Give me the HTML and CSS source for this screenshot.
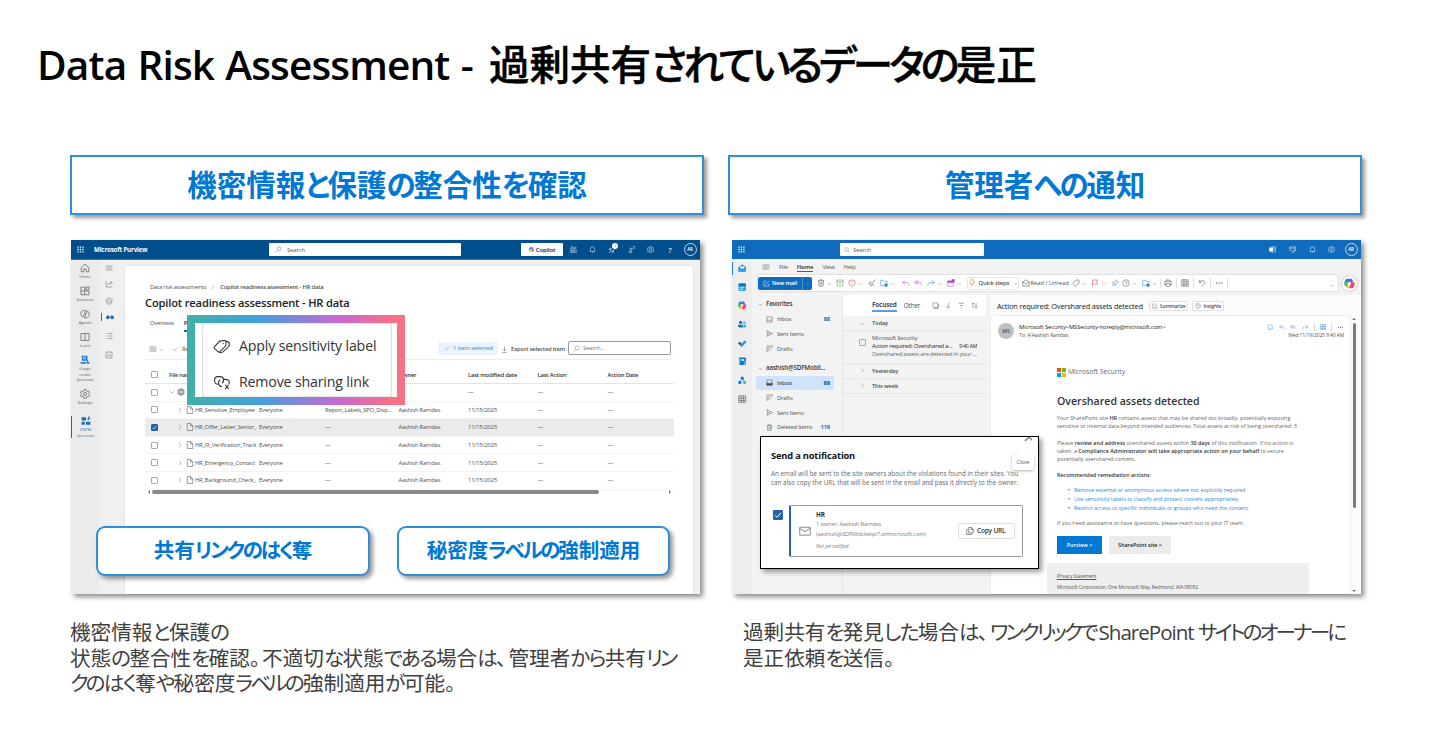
FILE: index.html
```html
<!DOCTYPE html>
<html lang="ja">
<head>
  <meta charset="utf-8">
  <title>Data Risk Assessment</title>
  <link rel="stylesheet" href="styles.css">
</head>
<body>
  <!-- Icon sprite -->
  <svg class="sprite" aria-hidden="true">
    <symbol id="waffle" viewBox="0 0 16 16"><path d="M1 1h3v3H1zM6.500 1h3v3h-3zM12 1h3v3h-3zM1 6.500h3v3H1zM6.500 6.500h3v3h-3zM12 6.500h3v3h-3zM1 12h3v3H1zM6.500 12h3v3h-3zM12 12h3v3h-3z" fill="currentColor" stroke="none"/></symbol>
    <symbol id="search" viewBox="0 0 16 16"><circle cx="9.500" cy="6.500" r="4.500"/><path d="M6.300 9.700 1.500 14.500"/></symbol>
    <symbol id="search-r" viewBox="0 0 16 16"><circle cx="6.500" cy="6.500" r="5"/><path d="m10 10 5 5"/></symbol>
    <symbol id="chev-d" viewBox="0 0 16 16"><path d="m3 6 5 5 5-5"/></symbol>
    <symbol id="chev-r" viewBox="0 0 16 16"><path d="m5 2 6 6-6 6"/></symbol>
    <symbol id="check" viewBox="0 0 16 16"><path d="m2 8.500 4 4 8-9"/></symbol>
    <symbol id="copilot" viewBox="0 0 16 16"><g stroke="none"><path d="M5 1h5c1 0 1.600.7 2 1.800L13 6H7L5.500 10H2C.3 10 .2 8 .6 6.500L2 2.500C2.500 1.500 3.500 1 5 1z" fill="#1b8fe8"/><path d="M.6 7c.4-1 1-1.500 2-1.500h3L4.500 10l-.8 3C2 13 0 10 .6 7z" fill="#3cc26b"/><path d="M3.500 11 5 6h3l-1 5-1.500 4C4.500 15 3.500 13.500 3.500 11z" fill="#f5b41c"/><path d="M11 6h3c1.700 0 2 1.800 1.500 3.500L14 13.500c-.5 1-1.500 1.500-3 1.500H5.500C7 15 7.500 14 8 12.500L9.500 8c.3-1 .8-2 1.500-2z" fill="#ef4a6b"/><path d="M9.500 1C12 1 12 2.500 12.500 4l.5 2 1.500.2C13 6 11 6 10 8L8.500 6 9 2z" fill="#8b52e6"/><path d="m6.800 6-.9 4h3.300l.9-4z" fill="#fff"/></g></symbol>
    <symbol id="bell" viewBox="0 0 16 16"><path d="M3 11.500V7a5 5 0 0 1 10 0v4.500l1 1H2zM6.500 13a1.500 1.500 0 0 0 3 0"/></symbol>
    <symbol id="gear" viewBox="0 0 16 16"><path d="m6.500 1-.4 2-2 1L2 3.400.7 6 2.200 7.400v1.300L.7 10 2 12.600l2-.6 2.100 1 .4 2h3l.4-2 2.100-1 2 .6 1.300-2.600-1.500-1.300V7.400L15.300 6 14 3.400 12 4l-2.100-1-.4-2z"/><circle cx="8" cy="8" r="2.500"/></symbol>
    <symbol id="rocket" viewBox="0 0 16 16"><path d="M5 10c0-5 4-8.500 9-8.500C14 7 11 10.500 6.500 11zM4.500 7H2l2-2.500h2.500M9 11v2.500L11 12V9.500M2 14l3-3"/></symbol>
    <symbol id="people" viewBox="0 0 16 16"><circle cx="7" cy="7" r="2.500"/><path d="M2 14.500c0-4 9-4 7 0zM10.500 1.500H15v4h-2.500L11 7"/></symbol>
    <symbol id="tools" viewBox="0 0 16 16"><path d="M1 2h6.500M4.500 2v12.500M1.500 5v9.500h6V5M9.500 1.500v6M13.500 1.500v5M9.500 10h5v4.500h-5zM9.500 5h4"/></symbol>
    <symbol id="home" viewBox="0 0 16 16"><path d="M2 7.500 8 1.500l6 6V14H10V9.500H6V14H2z"/></symbol>
    <symbol id="apps" viewBox="0 0 16 16"><path d="M1.500 2h6v12h-6zM1.500 8h13v6h-7M9.500 1.500h5V6h-5z"/></symbol>
    <symbol id="agents" viewBox="0 0 16 16"><path d="M7 2C2 2 1 6 1.500 9c.3 2.500 1.500 3.500 3 4L9.500 3C9 2.300 8 2 7 2zM11.500 3c3 1 3.500 4 3 7-.5 3-3.500 4.500-7.500 4z"/></symbol>
    <symbol id="book" viewBox="0 0 16 16"><path d="M1.500 2.500H14.500v11H1.500zM8 2.500v11"/></symbol>
    <symbol id="usage" viewBox="0 0 16 16"><g fill="currentColor" stroke="none"><path d="M3 1h9v8H3zM1 11h9v3H1z"/><path d="M11 8h2v3h2v3h-4z"/></g><path d="M5 3.500h4M5 6h4" stroke="#fff"/></symbol>
    <symbol id="dspm" viewBox="0 0 16 16"><path d="M1 2h7v5H1zM1 9h5v5H1zM8 9h7v5H8zM10 5l1.200-2L13 2l-1.800-.5L13 0l.5 1.500L15 4l-2 .5L12 7z" fill="currentColor" stroke="none"/></symbol>
    <symbol id="menu" viewBox="0 0 16 16"><path d="M1 4h14M1 8h14M1 12h14"/></symbol>
    <symbol id="chart" viewBox="0 0 16 16"><path d="M2 2v12h12M4.500 10 8 6.500l2.500 2L14 4M10.500 4H14v3.500"/></symbol>
    <symbol id="eye" viewBox="0 0 16 16"><path d="M14 11a6.500 6.500 0 1 1 .5-4.500c0 3-3 3.500-3.500 1.500a3 3 0 1 0-1 2.500c2 1 4-.5 4-1.500"/></symbol>
    <symbol id="glasses" viewBox="0 0 16 16"><path d="M2 5h4v2h4V5h4l1.500 3v4H10V9.500H6V12H.5V8z" fill="currentColor" stroke="none"/></symbol>
    <symbol id="list" viewBox="0 0 16 16"><path d="M1 3h2M5.500 3H15M1 8h2M5.500 8H15M1 13h2M5.500 13H15"/></symbol>
    <symbol id="report" viewBox="0 0 16 16"><path d="M2 2h12v12H2zM5 11V8M8 11V5M11 11V8"/></symbol>
    <symbol id="doc" viewBox="0 0 16 16"><path d="M2.500 1H9l4.500 4.500V15h-11zM9 1v5h4.500"/></symbol>
    <symbol id="globe" viewBox="0 0 16 16"><circle cx="8" cy="8" r="6.500"/><ellipse cx="8" cy="8" rx="3" ry="6.500"/><path d="M2 5.500h12M2 10.500h12"/></symbol>
    <symbol id="download" viewBox="0 0 16 16"><path d="M8 1v10M4 7.500 8 11.500l4-4M3 15h10"/></symbol>
    <symbol id="label" viewBox="0 0 20 16"><path d="m1.500 8.500 6-6.500 5-.7c1.300 0 2 .8 2 2l-.3 4L8 13.500c-1 .8-2 .8-2.800 0L1.500 10c-.4-.5-.4-1 0-1.500zM14.500 2c3 .5 3.800 2 3.800 3.500 0 2-1 3-2.300 4L11 14c-1.500 1.200-3 1.300-4.500.5"/><path d="m11 4.300.8.800"/></symbol>
    <symbol id="unlink" viewBox="0 0 20 16"><path d="M5.500 10C.5 10 .5 1.500 5.500 1.500H8c4 0 5 5 2 7M8 5c-3 2-2.500 7.500 2 7.500M11.500 4.500H14c4 0 5 3 3.500 5.500M13.500 10.500l4 4.500M17.500 10.500l-4 4.500"/></symbol>
    <symbol id="mail" viewBox="0 0 16 16"><path d="M1 3h14v10.500H1zM1 4.500l7 4.500 7-4.500"/></symbol>
    <symbol id="mail-open" viewBox="0 0 16 16"><path d="M1.500 6 8 1.500 14.500 6v8h-13zM1.500 6 8 10l6.500-4"/></symbol>
    <symbol id="inbox" viewBox="0 0 16 16"><path d="M2 2h12v12H2zM2 9h3.500c.5 3 4.500 3 5 0H14"/></symbol>
    <symbol id="inbox-fill" viewBox="0 0 16 16"><path d="M2 2h12v12H2z"/><path d="M2 9h3.500c.5 2.500 4.500 2.500 5 0H14v5H2z" fill="currentColor"/></symbol>
    <symbol id="send" viewBox="0 0 16 16"><path d="m2 1.500 13 6.500-13 6.500L4 8zM4 8h5"/></symbol>
    <symbol id="draft" viewBox="0 0 16 16"><path d="M14.500 2 12 1 3 10l-1.500 4.500L6 13l8.500-9zM1 2h8M1 5.500h5M1 9h2"/></symbol>
    <symbol id="trash" viewBox="0 0 16 16"><path d="M1.500 3.500h13M6 3.500v-2h4v2M3 3.500 4 14.500h8l1-11M6.500 6v6M9.500 6v6"/></symbol>
    <symbol id="archive" viewBox="0 0 16 16"><path d="M1.500 2h13v3.500h-13zM2.500 5.500v8.500h11V5.500M6 8.500h4"/></symbol>
    <symbol id="shield" viewBox="0 0 16 16"><path d="M8 1.500c2 1.500 4 2 6 2V8c0 3.500-2.500 5.500-6 7-3.500-1.500-6-3.500-6-7V3.500c2 0 4-.5 6-2zM8 4.500v4M8 10.500v1.500"/></symbol>
    <symbol id="broom" viewBox="0 0 16 16"><path d="M15 1 9.500 6.500M6 5l5 5-4 4.500L1.500 9zM4 8l4.500 4.500"/></symbol>
    <symbol id="folder" viewBox="0 0 16 16"><path d="M8 13.500H1.500v-11H6l2 2h6.500V8"/><circle cx="12" cy="12" r="3" fill="currentColor"/></symbol>
    <symbol id="reply" viewBox="0 0 16 16"><path d="M6 2.500 1.500 7 6 11.500M1.500 7H9c3.500 0 5 2 5.500 6"/></symbol>
    <symbol id="reply-all" viewBox="0 0 16 16"><path d="M5 2.500.8 7 5 11.500M8.500 2.500 4.300 7l4.200 4.500M4.300 7H10c3.500 0 4.500 2 5 6"/></symbol>
    <symbol id="forward" viewBox="0 0 16 16"><path d="M10 2.500 14.500 7 10 11.500M14.500 7H7c-3.500 0-5 2-5.500 6"/></symbol>
    <symbol id="calendar" viewBox="0 0 16 16"><path d="M1.500 4h11v10.500h-11z"/><path d="M1.500 4h11v3h-11zM10 1h5v5h-5z" fill="currentColor"/></symbol>
    <symbol id="bolt" viewBox="0 0 16 16"><path d="M5 1.500h7L10 6h3.500L6 14.500 7.500 9H3.500z"/></symbol>
    <symbol id="tag" viewBox="0 0 16 16"><path d="M8 2h6v6l-7 6.500L1.500 9z"/><path d="M11.500 4.500h.1"/></symbol>
    <symbol id="flag" viewBox="0 0 16 16"><path d="M3 15V2h11l-3 4 3 4H3"/></symbol>
    <symbol id="pin" viewBox="0 0 16 16"><path d="m10 1.500 4.500 4.500L10 8.500 9 13 3 7l4.500-1zM6 10l-4.500 4.500"/></symbol>
    <symbol id="clock" viewBox="0 0 16 16"><circle cx="8" cy="8" r="6.500"/><path d="M8 4v4.500h3"/></symbol>
    <symbol id="print" viewBox="0 0 16 16"><path d="M4 5V2h8v3M4 12H1.500V5h13v7H12M4 9h8v5.500H4z"/></symbol>
    <symbol id="grid" viewBox="0 0 16 16"><path d="M1.500 1.500h13v13h-13zM1.500 6h13M1.500 10.500h13M6 1.500v13M10.500 1.500v13"/></symbol>
    <symbol id="undo" viewBox="0 0 16 16"><path d="M2.500 1.500V7H8M3 6.500C6 1.500 13 2 13.500 6.500c.3 3-2.500 5-6 8.500"/></symbol>
    <symbol id="more" viewBox="0 0 16 16"><path d="M2 7h2.500v2H2zM7 7h2.500v2H7zM12 7h2.500v2H12z" fill="currentColor" stroke="none"/></symbol>
    <symbol id="select" viewBox="0 0 16 16"><path d="M2 3.500c0-1 .5-1.500 1.500-1.500h8c1 0 1.500.5 1.500 1.500v8c0 .8-.5 1.500-1.500 1.500h-8C2.500 13 2 12.500 2 11.500zM5 15h7c2 0 3-1 3-3V5"/></symbol>
    <symbol id="jump" viewBox="0 0 16 16"><path d="M11 1C7 4 7 7 7 14M3.500 10.500 7 14l3.500-3.500"/></symbol>
    <symbol id="filter" viewBox="0 0 16 16"><path d="M1.500 3h13M4 8h8M6.500 13h3"/></symbol>
    <symbol id="sort" viewBox="0 0 16 16"><path d="M4.500 14V2M1.500 5l3-3 3 3M11.500 2v12M8.500 11l3 3 3-3"/></symbol>
    <symbol id="compose" viewBox="0 0 16 16"><path d="M8 2.500H2v11.500h11.500V8M14.500 1.500 7 9l-.5 2"/></symbol>
    <symbol id="copy" viewBox="0 0 16 16"><path d="M5.500 1H11l3.500 3.500V12h-9zM10.500 1v4h4M3 4H1.500v11H11v-1.500"/></symbol>
    <symbol id="smile" viewBox="0 0 16 16"><circle cx="8" cy="8" r="6.500"/><path d="M5 9.500c1.500 2 4.500 2 6 0M5.500 6h.5M10 6h.5"/></symbol>
    <symbol id="note" viewBox="0 0 16 16"><path d="M1.500 2h13v8l-4 4H5M1.500 2v8h4M1.500 5h13M10.500 14v-4h4"/></symbol>
    <symbol id="app-n" viewBox="0 0 16 16"><path d="M5 2h10v12H5M11 5h4M11 8.500h4"/><path d="M1 4h8v8H1z" fill="currentColor"/></symbol>
    <symbol id="r-mail" viewBox="0 0 16 16"><g stroke="none"><path d="M1 6 8 1l7 5v8H1z" fill="#1479cf"/><path d="M4 4h8v5H4z" fill="#e6f4ff"/><path d="m1 7 7 4 7-4v7.500H1z" fill="#28a8ea"/></g></symbol>
    <symbol id="r-cal" viewBox="0 0 16 16"><g stroke="none"><rect x="1" y="1" width="14" height="14" rx="2" fill="#2aa5ec"/><path d="M1 5V3c0-1.200.8-2 2-2h10c1.200 0 2 .8 2 2v2z" fill="#0f6cbd"/><path d="M4 8h8v1.500H4zM4 11h5v1.500H4z" fill="#d8f0ff"/></g></symbol>
    <symbol id="r-people" viewBox="0 0 16 16"><g stroke="none"><circle cx="5" cy="4.500" r="3" fill="#1675c9"/><circle cx="12" cy="5" r="2.300" fill="#36b0f0"/><path d="M0 9h9v5H2c-1 0-2-2-2-5z" fill="#1675c9"/><path d="M10 9h6v3c0 1-1 2-2 2h-4z" fill="#36b0f0"/></g></symbol>
    <symbol id="r-todo" viewBox="0 0 16 16"><g stroke="none"><path d="m0 8 3-3 4 4-3 3z" fill="#1557a8"/><path d="m4 12 9-9.500 3 3L7 15z" fill="#2a8de0"/></g></symbol>
    <symbol id="r-one" viewBox="0 0 16 16"><g stroke="none"><rect x="2" y="1" width="13" height="14" rx="2" fill="#1169c7"/><path d="M2 1h3v14H2zM11 8h4v7h-5z" fill="#35b5f1"/><path d="M6 4h6v3H6z" fill="#fff"/></g></symbol>
    <symbol id="r-org" viewBox="0 0 16 16"><g stroke="none"><circle cx="8" cy="4" r="3" fill="#1675c9"/><circle cx="3.500" cy="12" r="3" fill="#1675c9"/><circle cx="12.500" cy="12" r="3" fill="#36b0f0"/></g><path d="M8 5 4 11M8 5l4 6" stroke="#1675c9"/></symbol>
  </svg>

  <main class="slide">
    <h1>Data Risk Assessment - <span class="jp">過剰共有<span class="kana">されている</span><span class="kata">データ</span><span class="kana">の</span>是正</span></h1>

    <div class="columns">
      <section class="column">
        <h2><span>機密情報<span class="kana">と</span>保護<span class="kana">の</span>整合性<span class="kana">を</span>確認</span></h2>

        <div class="shot purview">
          <header class="pv-top">
            <svg class="icon"><use href="#waffle"/></svg>
            <b>Microsoft Purview</b>
            <div class="pv-search"><svg class="icon"><use href="#search"/></svg>Search</div>
            <i></i>
            <div class="pv-copilot"><svg class="icon"><use href="#copilot"/></svg>Copilot</div>
            <svg class="icon"><use href="#tools"/></svg>
            <svg class="icon"><use href="#bell"/></svg>
            <div class="with-badge"><svg class="icon"><use href="#rocket"/></svg><em>1</em></div>
            <svg class="icon"><use href="#people"/></svg>
            <svg class="icon"><use href="#gear"/></svg>
            <span class="question">?</span>
            <span class="avatar">AR</span>
          </header>
          <div class="pv-main">
            <nav class="pv-nav">
              <div><svg class="icon"><use href="#home"/></svg>Home</div>
              <div><svg class="icon"><use href="#apps"/></svg>Solutions</div>
              <div><svg class="icon"><use href="#agents"/></svg>Agents</div>
              <div><svg class="icon"><use href="#book"/></svg>Learn</div>
              <div class="tall"><svg class="icon blue"><use href="#usage"/></svg>Usage<br>center<br>(preview)</div>
              <div><svg class="icon"><use href="#gear"/></svg>Settings</div>
              <div class="current"><svg class="icon"><use href="#dspm"/></svg>DSPM<br>(preview)</div>
            </nav>
            <nav class="pv-subnav">
              <svg class="icon"><use href="#menu"/></svg>
              <svg class="icon"><use href="#chart"/></svg>
              <svg class="icon"><use href="#eye"/></svg>
              <div class="current"><svg class="icon"><use href="#glasses"/></svg></div>
              <svg class="icon"><use href="#list"/></svg>
              <svg class="icon"><use href="#report"/></svg>
            </nav>
            <div class="pv-card">
              <div class="crumbs">Data risk assessments<svg class="icon"><use href="#chev-r"/></svg><b>Copilot readiness assessment - HR data</b></div>
              <h3>Copilot readiness assessment - HR data</h3>
              <div class="tabs"><span>Overview</span><b>Protect</b></div>
              <div class="toolbar">
                <svg class="icon"><use href="#menu"/></svg>
                <svg class="icon chev"><use href="#chev-d"/></svg>
                <svg class="icon tick"><use href="#check"/></svg>
                <span>Remediate</span>
                <div class="selected-count"><svg class="icon"><use href="#check"/></svg>1 item selected</div>
                <svg class="icon dl"><use href="#download"/></svg>
                <b>Export selected item</b>
                <div class="table-search"><svg class="icon"><use href="#search"/></svg>Search...</div>
              </div>
              <div class="table">
                <div class="tr th"><i class="box"></i><span></span><span class="file">File name</span><span></span><span></span><span>Owner</span><span>Last modified date</span><span>Last Action</span><span>Action Date</span></div>
                <div class="tr site"><i class="box"></i><svg class="icon chev"><use href="#chev-d"/></svg><span class="name"><svg class="icon globe"><use href="#globe"/></svg></span><span></span><span></span><span></span><span>—</span><span>—</span><span>—</span></div>
                <div class="tr"><i class="box"></i><svg class="icon chev"><use href="#chev-r"/></svg><span class="name"><svg class="icon"><use href="#doc"/></svg><span>HR_Sensitive_Employee</span></span><span>Everyone</span><span>Report_Labels_SPO_Disp...</span><span>Aashish Ramdas</span><span>11/15/2025</span><span>—</span><span>—</span></div>
                <div class="tr active"><i class="box on"><svg class="icon"><use href="#check"/></svg></i><svg class="icon chev"><use href="#chev-r"/></svg><span class="name"><svg class="icon"><use href="#doc"/></svg><span>HR_Offer_Letter_Senior_</span></span><span>Everyone</span><span>—</span><span>Aashish Ramdas</span><span>11/15/2025</span><span>—</span><span>—</span></div>
                <div class="tr"><i class="box"></i><svg class="icon chev"><use href="#chev-r"/></svg><span class="name"><svg class="icon"><use href="#doc"/></svg><span>HR_I9_Verification_Track</span></span><span>Everyone</span><span>—</span><span>Aashish Ramdas</span><span>11/15/2025</span><span>—</span><span>—</span></div>
                <div class="tr"><i class="box"></i><svg class="icon chev"><use href="#chev-r"/></svg><span class="name"><svg class="icon"><use href="#doc"/></svg><span>HR_Emergency_Contact</span></span><span>Everyone</span><span>—</span><span>Aashish Ramdas</span><span>11/15/2025</span><span>—</span><span>—</span></div>
                <div class="tr"><i class="box"></i><svg class="icon chev"><use href="#chev-r"/></svg><span class="name"><svg class="icon"><use href="#doc"/></svg><span>HR_Background_Check_</span></span><span>Everyone</span><span>—</span><span>Aashish Ramdas</span><span>11/15/2025</span><span>—</span><span>—</span></div>
              </div>
              <div class="hscroll"><i class="arrow-l"></i><div></div><i class="arrow-r"></i></div>
            </div>
          </div>

          <div class="popup">
            <div class="popup-menu">
              <div><svg><use href="#label"/></svg>Apply sensitivity label</div>
              <div><svg><use href="#unlink"/></svg>Remove sharing link</div>
            </div>
          </div>
          <div class="callout unshare"><span>共有<span class="kata">リンク</span><span class="kana">のはく</span>奪</span></div>
          <div class="callout enforce"><span>秘密度<span class="kata">ラベル</span><span class="kana">の</span>強制適用</span></div>
        </div>

        <p>機密情報<span class="kana">と</span>保護<span class="kana">の</span><br>状態<span class="kana">の</span>整合性<span class="kana">を</span>確認<span class="stop">。</span>不適切<span class="kana">な</span>状態<span class="kana">である</span>場合<span class="kana">は</span><span class="stop">、</span>管理者<span class="kana">から</span>共有<span class="kata">リン</span><br><span class="kata">ク</span><span class="kana">のはく</span>奪<span class="kana">や</span>秘密度<span class="kata">ラベル</span><span class="kana">の</span>強制適用<span class="kana">が</span>可能。</p>
      </section>

      <section class="column second">
        <h2><span>管理者<span class="kana">への</span>通知</span></h2>

        <div class="shot outlook">
          <header class="ol-top">
            <svg class="icon"><use href="#waffle"/></svg>
            <i></i>
            <div class="ol-search"><svg class="icon"><use href="#search-r"/></svg>Search</div>
            <i></i>
            <svg class="icon"><use href="#app-n"/></svg>
            <svg class="icon"><use href="#note"/></svg>
            <svg class="icon"><use href="#bell"/></svg>
            <svg class="icon"><use href="#gear"/></svg>
            <span class="avatar">AR</span>
          </header>
          <div class="ol-main">
            <nav class="rail">
              <div class="current"><svg><use href="#r-mail"/></svg></div>
              <div><svg><use href="#r-cal"/></svg></div>
              <div><svg><use href="#copilot"/></svg></div>
              <div><svg><use href="#r-people"/></svg></div>
              <div><svg><use href="#r-todo"/></svg></div>
              <div><svg><use href="#r-one"/></svg></div>
              <div><svg><use href="#r-org"/></svg></div>
              <div><svg class="icon"><use href="#grid"/></svg></div>
            </nav>
            <div class="ol-work">
              <div class="menu-tabs"><svg class="icon"><use href="#menu"/></svg><span>File</span><b>Home</b><span>View</span><span>Help</span></div>
              <div class="ribbon-row">
                <div class="ribbon">
                  <div class="new-mail"><svg class="icon"><use href="#compose"/></svg>New mail<svg class="icon chev"><use href="#chev-d"/></svg></div>
                  <div class="tools manage">
                    <div><svg class="icon"><use href="#trash"/></svg><svg class="icon chev"><use href="#chev-d"/></svg></div>
                    <svg class="icon green"><use href="#archive"/></svg>
                    <div><svg class="icon red"><use href="#shield"/></svg><svg class="icon chev"><use href="#chev-d"/></svg></div>
                    <svg class="icon"><use href="#broom"/></svg>
                    <div><svg class="icon blue"><use href="#folder"/></svg><svg class="icon chev"><use href="#chev-d"/></svg></div>
                  </div>
                  <div class="tools respond">
                    <svg class="icon purple"><use href="#reply"/></svg>
                    <svg class="icon purple"><use href="#reply-all"/></svg>
                    <div><svg class="icon blue"><use href="#forward"/></svg><svg class="icon chev"><use href="#chev-d"/></svg></div>
                    <div><svg class="icon purple"><use href="#calendar"/></svg><svg class="icon chev"><use href="#chev-d"/></svg></div>
                  </div>
                  <div class="quick"><svg class="icon orange"><use href="#bolt"/></svg>Quick steps<svg class="icon chev"><use href="#chev-d"/></svg></div>
                  <div class="read"><svg class="icon"><use href="#mail-open"/></svg>Read / Unread</div>
                  <div class="tools mark">
                    <div><svg class="icon"><use href="#tag"/></svg><svg class="icon chev"><use href="#chev-d"/></svg></div>
                    <div><svg class="icon red"><use href="#flag"/></svg><svg class="icon chev"><use href="#chev-d"/></svg></div>
                    <svg class="icon blue"><use href="#pin"/></svg>
                    <div><svg class="icon"><use href="#clock"/></svg><svg class="icon chev"><use href="#chev-d"/></svg></div>
                    <div><svg class="icon blue"><use href="#folder"/></svg><svg class="icon chev"><use href="#chev-d"/></svg></div>
                  </div>
                  <div class="tools extra">
                    <i></i><svg class="icon"><use href="#print"/></svg><i></i><svg class="icon"><use href="#grid"/></svg><i></i><svg class="icon"><use href="#undo"/></svg><i></i><svg class="icon"><use href="#more"/></svg><i></i>
                  </div>
                  <svg class="icon chev last"><use href="#chev-d"/></svg>
                </div>
                <div class="copilot-fab"><svg><use href="#copilot"/></svg></div>
              </div>
              <div class="panes">
                <div class="folders">
                  <div class="group"><svg class="icon"><use href="#chev-d"/></svg>Favorites</div>
                  <div><svg class="icon"><use href="#inbox"/></svg>Inbox<b>88</b></div>
                  <div><svg class="icon"><use href="#send"/></svg>Sent Items</div>
                  <div><svg class="icon"><use href="#draft"/></svg>Drafts</div>
                  <div class="group account"><svg class="icon"><use href="#chev-d"/></svg>aashish@SDFMobil...</div>
                  <div class="open"><svg class="icon"><use href="#inbox-fill"/></svg>Inbox<b>88</b></div>
                  <div><svg class="icon"><use href="#draft"/></svg>Drafts</div>
                  <div><svg class="icon"><use href="#send"/></svg>Sent Items</div>
                  <div><svg class="icon"><use href="#trash"/></svg>Deleted Items<b>119</b></div>
                </div>
                <div class="messages">
                  <div class="list-head"><b>Focused</b><span>Other</span>
                    <svg class="icon"><use href="#select"/></svg><svg class="icon"><use href="#jump"/></svg><svg class="icon"><use href="#filter"/></svg><svg class="icon"><use href="#sort"/></svg>
                  </div>
                  <div class="day"><svg class="icon"><use href="#chev-d"/></svg>Today</div>
                  <div class="message">
                    <i class="box"></i>
                    <div>
                      <div>Microsoft Security</div>
                      <div class="subject"><span>Action required: Overshared a...</span><small>9:40 AM</small></div>
                      <div class="preview">Overshared assets are detected in your ...</div>
                    </div>
                  </div>
                  <div class="day"><svg class="icon"><use href="#chev-r"/></svg>Yesterday</div>
                  <div class="day"><svg class="icon"><use href="#chev-r"/></svg>This week</div>
                </div>
                <div class="reading">
                  <div class="subject-line"><b>Action required: Overshared assets detected</b><span class="chip"><svg class="icon"><use href="#compose"/></svg>Summarize</span><span class="chip"><svg class="icon"><use href="#clock"/></svg>Insights</span></div>
                  <div class="mail-row">
                    <article class="mail">
                      <div class="sender">
                        <span class="ms">MS</span>
                        <div class="from"><div>Microsoft Security&lt;MSSecurity-noreply@microsoft.com&gt;</div><small>To: ⦿Aashish Ramdas</small></div>
                        <div class="actions">
                          <div><svg class="icon blue"><use href="#smile"/></svg><svg class="icon purple"><use href="#reply"/></svg><svg class="icon purple"><use href="#reply-all"/></svg><svg class="icon blue"><use href="#forward"/></svg><i></i><svg class="icon blue"><use href="#grid"/></svg><i></i><svg class="icon"><use href="#more"/></svg></div>
                          <small>Wed 11/19/2025 9:40 AM</small>
                        </div>
                      </div>
                      <div class="mail-body">
                        <div class="brand"><i></i>Microsoft Security</div>
                        <h4>Overshared assets detected</h4>
                        <div class="para">Your SharePoint site <b>HR</b> contains assets that may be shared too broadly, potentially exposing<br>sensitive or internal data beyond intended audiences. Total assets at risk of being overshared: 3</div>
                        <div class="para">Please <b>review and address</b> overshared assets within <b>30 days</b> of this notification. If no action is<br>taken, a <b>Compliance Administrator will take appropriate action on your behalf</b> to secure<br>potentially overshared content.</div>
                        <div class="para"><b>Recommended remediation actions</b>:</div>
                        <ul>
                          <li>Remove external or anonymous access where not explicitly required.</li>
                          <li>Use sensitivity labels to classify and protect content appropriately.</li>
                          <li>Restrict access to specific individuals or groups who need the content.</li>
                        </ul>
                        <div class="para">If you need assistance or have questions, please reach out to your IT team.</div>
                        <div class="mail-buttons"><span class="primary">Purview &gt;</span><span>SharePoint site &gt;</span></div>
                      </div>
                      <footer><u>Privacy Statement</u><div>Microsoft Corporation, One Microsoft Way, Redmond, WA 98052</div></footer>
                    </article>
                    <div class="vscroll"><i class="arrow-u"></i><div></div><i class="arrow-d"></i></div>
                  </div>
                </div>
              </div>
            </div>
          </div>

          <div class="dialog">
            <h5>Send a notification</h5>
            <div class="dialog-text">An email will be sent to the site owners about the violations found in their sites. You<br>can also copy the URL that will be sent in the email and pass it directly to the owner.</div>
            <div class="recipient">
              <i class="box on"><svg class="icon"><use href="#check"/></svg></i>
              <div class="recipient-card">
                <svg class="icon"><use href="#mail"/></svg>
                <div class="who"><b>HR</b><div>1 owner: Aashish Ramdas</div><div class="address">(aashish@SDFMobilekpi7.onmicrosoft.com)</div><em>Not yet notified</em></div>
                <span class="copy-url"><svg class="icon"><use href="#copy"/></svg>Copy URL</span>
              </div>
            </div>
            <svg class="icon dialog-x"><path d="m1 8 4-4 4 4" /></svg>
            <span class="tooltip">Close</span>
          </div>
        </div>

        <p class="inset">過剰共有<span class="kana">を</span>発見<span class="kana">した</span>場合<span class="kana">は</span><span class="stop">、</span><span class="kata">ワンクリック</span>で<span class="latin">SharePoint </span><span class="kata">サイトのオーナーに</span><br>是正依頼<span class="kana">を</span>送信。</p>
      </section>
    </div>
  </main>
</body>
</html>
```
FILE: styles.css
```css
* {
  box-sizing: border-box;
}
body {
  margin: 0;
  background: #fff;
  font-family: "Open Sans", "Noto Sans CJK JP", sans-serif;
}
.sprite {
  position: absolute;
  width: 0;
  height: 0;
}
.icon {
  fill: none;
  stroke: currentColor;
  stroke-width: 1.1;
  width: 8px;
  height: 8px;
  flex: none;
}
svg {
  display: block;
}
i, em {
  font-style: normal;
}
.blue { color: #2b88d8; }
.green { color: #5a9e3a; }
.red { color: #c94a50; }
.purple { color: #a94fb8; }
.orange { color: #c98a1b; }

/* Slide */
.slide {
  width: 1432px;
  height: 732px;
  overflow: hidden;
  padding: 35px 0 0 38px;
}
h1 {
  margin: 0 0 0 -1px;
  height: 60px;
  line-height: 60px;
  font-size: 40.5px;
  font-weight: 600;
  letter-spacing: -0.85px;
  word-spacing: 1.5px;
  color: #000;
  white-space: nowrap;
}
h1, h2, p, .callout {
  font-feature-settings: "palt";
}
h1 .jp {
  margin-left: 5px;
  font-weight: 500;
  letter-spacing: 0;
  -webkit-text-stroke: 0.5px #000;
}
.kana {
  letter-spacing: -0.08em;
}
.kata {
  letter-spacing: -0.14em;
}
.stop {
  margin-right: 0.1em;
}
.latin {
  letter-spacing: -0.05em;
}
h1 .kana, h1 .kata {
  letter-spacing: -0.095em;
}
.columns {
  display: flex;
  gap: 24px;
  padding: 60px 0 0 32px;
}
.column {
  width: 634px;
}
h2 {
  margin: 0 0 25px;
  height: 60px;
  border: 2px solid #2f8fdc;
  box-shadow: 3px 3px 4px rgba(0, 0, 0, 0.4);
  color: #0078d4;
  font-size: 29.5px;
  font-weight: 700;
  line-height: 56px;
  text-align: center;
  white-space: nowrap;
}
.shot {
  position: relative;
  width: 629px;
  height: 354px;
  margin-left: 1px;
  box-shadow: 3px 3px 5px rgba(0, 0, 0, 0.45);
  color: #505050;
  font-size: 5.8px;
  line-height: 8px;
  letter-spacing: -0.03em;
  white-space: nowrap;
}
.second .shot {
  margin-left: 4px;
}
p {
  margin: 26px 0 0;
  font-size: 20.6px;
  line-height: 25.6px;
  color: #404040;
  white-space: nowrap;
}
p.inset {
  margin-left: 15px;
}
.avatar {
  width: 13px;
  height: 13px;
  border: 1px solid #c5d8ea;
  border-radius: 50%;
  font-size: 4.5px;
  font-weight: 600;
  line-height: 11px;
  text-align: center;
}
.box {
  display: block;
  width: 7px;
  height: 7px;
  border: 1px solid #aaa;
  border-radius: 1px;
}
.box.on {
  background: #2564a8;
  border-color: #2564a8;
  color: #fff;
}
.box.on .icon {
  width: 100%;
  height: 100%;
  stroke-width: 2;
}

/* Purview */
.purview {
  background: #f0f0f0;
}
.pv-top {
  display: grid;
  grid-template-columns: 23px 175px 192px 60px 42px 20px 19px 20px 19px 19px 20px 20px;
  align-items: center;
  height: 20px;
  background: #004e8c;
  border-bottom: 1px solid #2d78b8;
  color: #fff;
}
.pv-top > .icon {
  justify-self: center;
  width: 7px;
  height: 7px;
}
.pv-top > .icon:first-child {
  margin-right: 4px;
}
.pv-top b {
  font-size: 6.2px;
  font-weight: 700;
}
.pv-search, .pv-copilot {
  display: flex;
  align-items: center;
  height: 13px;
  background: #fff;
  border-radius: 1px;
  color: #555;
  font-size: 6px;
}
.pv-search .icon {
  width: 7px;
  height: 7px;
  margin: 0 5px 0 6px;
  color: #3b6ea5;
}
.pv-copilot {
  justify-content: center;
  gap: 2px;
  color: #222;
  font-weight: 600;
}
.pv-copilot .icon {
  width: 5px;
  height: 5px;
}
.with-badge {
  position: relative;
  justify-self: center;
}
.with-badge em {
  position: absolute;
  left: 4px;
  top: -3px;
  width: 6px;
  height: 6px;
  border-radius: 50%;
  background: #fff;
  color: #004e8c;
  font-size: 4px;
  line-height: 6px;
  text-align: center;
}
.question {
  justify-self: center;
  font-size: 8px;
}
.pv-top .avatar {
  justify-self: center;
}
.pv-main {
  display: flex;
  height: 334px;
}
.pv-nav {
  width: 28px;
  padding-top: 3px;
  background: #ebebeb;
  font-size: 4.3px;
  line-height: 5.7px;
  text-align: center;
  color: #666;
}
.pv-nav div {
  height: 23px;
}
.pv-nav .icon {
  width: 10px;
  height: 10px;
  margin: 0 auto 1px;
  color: #555;
}
.pv-nav .icon.blue {
  color: #2b7cd3;
}
.pv-nav .tall {
  height: 34px;
}
.pv-nav .current {
  height: 22px;
  margin-top: 4px;
  border-left: 1px solid #2564a8;
  color: #3e78b8;
}
.pv-nav .current .icon {
  color: #1f69b8;
}
.pv-subnav {
  display: flex;
  flex-direction: column;
  align-items: center;
  gap: 8.3px;
  width: 27px;
  padding: 4px 7px 0 0;
  color: #707070;
}
.pv-subnav .current {
  display: flex;
  justify-content: center;
  width: 16px;
  border-left: 1px solid #1f69b8;
  color: #1f69b8;
}
.pv-subnav .icon:last-child {
  margin-top: 3px;
}
.pv-subnav .current .icon {
  margin: 0;
}
.pv-subnav .current + .icon {
  margin-top: 3px;
}
.pv-card {
  width: 568px;
  margin: 6px 0 0 -1px;
  padding: 17px 19px 0 20px;
  background: #fff;
  border-radius: 2px 2px 0 0;
  box-shadow: 0 0 2px rgba(0, 0, 0, 0.15);
}
.crumbs {
  display: flex;
  align-items: center;
  height: 8px;
  padding-left: 5px;
}
.crumbs .icon {
  width: 5px;
  height: 5px;
  margin: 0 5px 0 4px;
}
.crumbs b {
  font-weight: 600;
}
.pv-card h3 {
  margin: 4px 0 0;
  font-size: 11.15px;
  font-weight: 600;
  line-height: 16px;
  color: #222;
}
.tabs {
  display: flex;
  gap: 10px;
  height: 22px;
  padding: 8px 0 0 5px;
}
.tabs b {
  height: 13px;
  border-bottom: 2px solid #2564a8;
}
.toolbar {
  display: flex;
  align-items: center;
  height: 27px;
  padding: 6px 0 0 4px;
  border-bottom: 1px solid #eee;
}
.toolbar > .chev {
  width: 5px;
  height: 5px;
  margin: 0 8px 0 2px;
}
.toolbar > .tick {
  width: 6px;
  height: 6px;
  margin-right: 4px;
}
.toolbar > span {
  width: 256px;
}
.selected-count {
  display: flex;
  align-items: center;
  width: 60px;
  height: 13px;
  margin-top: -2px;
  padding-left: 6px;
  background: #ebf3fc;
  border-radius: 1px;
  color: #2b88d8;
  font-size: 6px;
}
.selected-count .icon {
  width: 6px;
  height: 6px;
  margin-right: 3px;
}
.toolbar .dl {
  width: 7px;
  height: 7px;
  margin: 0 3px;
}
.toolbar b {
  width: 57px;
  font-weight: 600;
}
.table-search {
  display: flex;
  align-items: center;
  width: 103px;
  height: 14px;
  margin-top: -2px;
  border: 1px solid #999;
  border-radius: 2px;
  color: #777;
}
.table-search .icon {
  width: 7px;
  height: 7px;
  margin: 0 3px 0 4px;
}
.tr {
  display: grid;
  grid-template-columns: 32px 9px 73px 66px 73.5px 69.5px 69.5px 70px 1fr;
  align-items: center;
  height: 17.6px;
  border-bottom: 1px solid #f3f3f3;
}
.tr .box {
  margin-left: 6px;
}
.tr .chev {
  width: 6px;
  height: 6px;
}
.tr .name {
  display: flex;
  align-items: center;
  gap: 2px;
}
.tr .name span {
  width: 60.5px;
  margin-left: -1px;
  overflow: hidden;
}
.th {
  height: 24px;
  padding-top: 6px;
  border-color: #e4e4e4;
  font-weight: 600;
  color: #333;
}
.th .file {
  margin-left: -17px;
}
.site .chev {
  margin-left: -8px;
}
.tr .globe {
  margin-left: -9px;
}
.tr.active {
  background: #ebebeb;
}
.hscroll {
  display: flex;
  align-items: center;
  gap: 2px;
  height: 5px;
  padding: 0 3px;
}
.hscroll div {
  width: 447px;
  height: 4px;
  margin-right: 68px;
  background: #8a8a8a;
  border-radius: 2px;
}
.arrow-l, .arrow-r {
  width: 0;
  height: 0;
  border: 2px solid transparent;
  border-left-width: 0;
  border-right-color: #777;
}
.arrow-r {
  border-width: 2px 0 2px 2px;
  border-left-color: #777;
}

/* Popup and callouts over the Purview panel */
.popup {
  position: absolute;
  left: 116px;
  top: 75px;
  width: 218px;
  height: 90px;
  padding: 8px;
  background: linear-gradient(90deg, #40b0a6, #479fdf 34%, #c968d0 70%, #f87086 94%);
}
.popup-menu {
  height: 74px;
  border: solid #fff;
  border-width: 0 5px 0 7px;
  background: #fff;
  padding: 5px 0 0 11px;
  box-shadow: inset 1px 0 2px rgba(0, 0, 0, 0.15), inset -1px 0 2px rgba(0, 0, 0, 0.15);
}
.popup-menu div {
  display: flex;
  align-items: center;
  gap: 8px;
  height: 36px;
  color: #333;
  font-size: 14.2px;
  line-height: 20px;
}
.popup-menu svg {
  width: 18px;
  height: 15px;
  fill: none;
  stroke: #333;
  stroke-width: 1.2;
}
.callout {
  position: absolute;
  top: 286px;
  height: 50px;
  border: 2px solid #2f8fdc;
  border-radius: 9px;
  background: #fff;
  box-shadow: 3px 3px 4px rgba(0, 0, 0, 0.4);
  color: #0078d4;
  font-size: 20.5px;
  font-weight: 700;
  letter-spacing: 0;
  line-height: 45px;
  text-align: center;
}
.callout .kana, .callout .kata {
  letter-spacing: -0.11em;
}
.unshare {
  left: 25px;
  width: 274px;
}
.enforce {
  left: 326px;
  width: 273px;
}

/* Outlook */
.outlook {
  background: #f3f3f3;
}
.ol-top {
  display: grid;
  grid-template-columns: 19px 89px 144px 278px 20px 20px 20px 19px 20px;
  align-items: center;
  justify-items: center;
  height: 19px;
  background: #0f6cbd;
  color: #fff;
}
.ol-top > .icon {
  width: 7px;
  height: 7px;
}
.ol-search {
  display: flex;
  align-items: center;
  width: 144px;
  height: 13px;
  border-radius: 1px;
  background: #fff;
  color: #555;
  font-size: 6px;
}
.ol-search .icon {
  width: 6px;
  height: 6px;
  margin: 0 3px 0 4px;
  color: #3b6ea5;
}
.ol-main {
  display: flex;
  height: 335px;
}
.rail {
  width: 20px;
  padding-top: 3px;
  background: #ededed;
}
.rail div {
  height: 13px;
  margin-bottom: 5.7px;
  padding: 2px 0 0 5px;
  border-left: 1px solid transparent;
}
.rail .current {
  border-color: #2b7cd3;
}
.rail svg {
  width: 8.5px;
  height: 8.5px;
}
.ol-work {
  width: 609px;
}
.menu-tabs {
  display: flex;
  align-items: center;
  gap: 9px;
  height: 15px;
  padding-left: 10px;
  font-size: 5.9px;
}
.menu-tabs b {
  font-weight: 700;
  border-bottom: 1px solid #0f6cbd;
  margin-top: 1px;
}
.ribbon-row {
  display: flex;
  align-items: center;
  gap: 4px;
  height: 18px;
  padding-left: 6px;
}
.ribbon {
  display: flex;
  align-items: center;
  width: 580px;
  height: 16px;
  background: #fff;
  border-radius: 2px;
  box-shadow: 0 0 2px rgba(0, 0, 0, 0.25);
}
.ribbon .chev {
  width: 5px;
  height: 5px;
  margin: 0 1px;
}
.new-mail {
  display: flex;
  align-items: center;
  width: 54px;
  height: 13px;
  padding-left: 5px;
  background: #0f6cbd;
  border-radius: 2px;
  color: #fff;
  font-weight: 600;
}
.new-mail .icon {
  width: 7px;
  height: 7px;
  margin-right: 2px;
}
.new-mail .chev {
  width: 10px;
  height: 13px;
  margin: 0 0 0 auto;
  padding: 0 2.5px;
  border-left: 1px solid #4a90d0;
}
.tools {
  display: flex;
  align-items: center;
  justify-content: space-between;
}
.tools div {
  display: flex;
  align-items: center;
  gap: 1px;
}
.tools i {
  width: 1px;
  height: 10px;
  background: #e0e0e0;
}
.manage {
  width: 79px;
  margin-left: 4.5px;
}
.respond {
  width: 62px;
  margin-left: 6px;
}
.quick {
  display: flex;
  align-items: center;
  width: 52px;
  height: 13px;
  margin-left: 3px;
  border: 1px solid #e6e6e6;
  border-radius: 2px;
  font-weight: 600;
}
.quick .icon {
  margin-right: 3px;
}
.quick .chev {
  margin: 0 0 0 auto;
}
.read {
  display: flex;
  align-items: center;
  gap: 1px;
  width: 53px;
  padding-left: 3px;
  letter-spacing: -0.01em;
}
.mark {
  width: 86px;
}
.extra {
  width: 68px;
  margin-left: 2px;
}
.ribbon .last {
  margin: 4px 4px 0 auto;
}
.copilot-fab {
  width: 15px;
  height: 15px;
  padding: 2px;
  border-radius: 50%;
  background: #fff;
  box-shadow: 0 0 2px rgba(0, 0, 0, 0.35);
}
.copilot-fab svg {
  width: 11px;
  height: 11px;
}
.panes {
  display: flex;
  height: 302px;
  padding-top: 3px;
}
.folders {
  width: 90px;
  padding: 2px 8px 0 4px;
}
.folders div {
  display: flex;
  align-items: center;
  height: 14.8px;
  padding-left: 10px;
}
.folders .icon {
  width: 7px;
  height: 7px;
  margin-right: 4px;
}
.folders .group {
  padding-left: 2px;
  font-size: 6.3px;
  font-weight: 600;
  color: #333;
}
.folders .group .icon {
  width: 5px;
  height: 5px;
  margin-right: 3px;
}
.folders .account {
  margin-top: 4.6px;
}
.folders .open {
  background: #cfe4fa;
  border-radius: 2px;
  font-weight: 600;
}
.folders b {
  margin: 0 4px 0 auto;
  color: #2f6ea3;
}
.messages {
  width: 144px;
  border-left: 1px solid #e6e6e6;
}
.list-head {
  display: flex;
  align-items: center;
  height: 21px;
  padding-left: 29px;
  background: #fff;
  font-size: 6.4px;
}
.list-head b {
  height: 12px;
  margin-right: 7px;
  padding-top: 1px;
  border-bottom: 2px solid #5b9fdd;
}
.list-head .icon {
  width: 7px;
  height: 7px;
  margin-right: 6px;
}
.list-head span {
  margin-right: 12px;
}
.day {
  display: flex;
  align-items: center;
  height: 15.2px;
  padding-left: 17px;
  border-bottom: 1px solid #e6e6e6;
  font-weight: 600;
}
.day .icon {
  width: 5px;
  height: 5px;
  margin-right: 7px;
}
.message {
  display: flex;
  height: 32.5px;
  padding: 3px 0 0 16px;
  border-bottom: 1px solid #e6e6e6;
}
.message .box {
  margin: 5px 6px 0 0;
}
.message .subject {
  display: flex;
  align-items: center;
  width: 105px;
  color: #222;
}
.message small {
  margin-left: auto;
  font-size: 5px;
}
.message .preview {
  color: #666;
}
.reading {
  width: 371px;
  margin-left: 4px;
  background: #fbfbfb;
}
.subject-line {
  display: flex;
  align-items: center;
  gap: 4px;
  height: 21px;
  padding-left: 7px;
}
.subject-line b {
  margin-right: 2px;
  font-size: 7.4px;
  font-weight: 400;
  color: #222;
}
.chip {
  display: flex;
  align-items: center;
  height: 10px;
  padding: 0 2px;
  border: 1px solid #e0e0e0;
  border-radius: 2px;
  background: #fff;
  font-size: 5px;
  font-weight: 600;
}
.chip .icon {
  width: 6px;
  height: 6px;
  margin-right: 2px;
}
.mail-row {
  display: flex;
  height: 278px;
}
.mail {
  width: 359px;
  height: 278px;
  margin-left: 1px;
  overflow: hidden;
  background: #fff;
  border-radius: 3px 3px 0 0;
  box-shadow: 0 0 2px rgba(0, 0, 0, 0.2);
}
.sender {
  display: flex;
  height: 46px;
  padding: 7px 6px 0 7px;
}
.ms {
  width: 16px;
  height: 16px;
  margin-right: 5px;
  border-radius: 50%;
  background: #bcc1c5;
  font-size: 5.2px;
  font-weight: 600;
  line-height: 16px;
  text-align: center;
}
.from {
  font-size: 5.95px;
  color: #222;
}
.sender small {
  display: block;
  font-size: 5.1px;
  line-height: 9px;
  color: #555;
}
.actions {
  margin-left: auto;
  text-align: right;
}
.actions > div {
  display: flex;
  justify-content: space-between;
  align-items: center;
  width: 77px;
  height: 8px;
}
.actions .icon {
  width: 6.5px;
  height: 6.5px;
}
.actions i {
  width: 1px;
  height: 8px;
  background: #ddd;
}
.mail-body {
  height: 201px;
  padding: 5px 0 0 66px;
  font-size: 5.4px;
  line-height: 8.2px;
  letter-spacing: 0;
  color: #666;
}
.mail-body b {
  color: #333;
  font-weight: 600;
}
.brand {
  display: flex;
  align-items: center;
  gap: 2px;
  height: 10px;
  font-size: 6.8px;
}
.brand i {
  width: 9px;
  height: 9px;
  background:
    linear-gradient(#f25022, #f25022) 0 0 / 4px 4px no-repeat,
    linear-gradient(#7fba00, #7fba00) 5px 0 / 4px 4px no-repeat,
    linear-gradient(#00a4ef, #00a4ef) 0 5px / 4px 4px no-repeat,
    linear-gradient(#ffb900, #ffb900) 5px 5px / 4px 4px no-repeat;
}
.mail-body h4 {
  margin: 17px 0 5px;
  font-size: 10.6px;
  font-weight: 600;
  line-height: 15px;
  color: #333;
}
.para {
  margin-bottom: 8.2px;
}
.mail-body ul {
  margin: -2px 0 6.5px;
  padding-left: 17px;
  line-height: 9px;
  color: #333;
}
.mail-body li {
  display: flex;
  color: #2b88d8;
}
.mail-body li::before {
  content: "•";
  width: 0;
  margin: 0 6px 0 -6px;
  color: #333;
}
.mail-buttons {
  display: flex;
  gap: 7px;
}
.mail-buttons span {
  height: 18px;
  width: 62px;
  background: #ebebeb;
  color: #222;
  font-weight: 600;
  line-height: 18px;
  text-align: center;
}
.mail-buttons .primary {
  width: 45px;
  background: #0078d4;
  color: #fff;
}
.mail footer {
  width: 262px;
  height: 40px;
  margin-left: 56px;
  padding: 9px 0 0 10px;
  background: #efefef;
  font-size: 5px;
  line-height: 8px;
  letter-spacing: -0.03em;
  color: #555;
}
.mail footer div {
  margin-top: 3px;
}
.vscroll {
  display: flex;
  flex-direction: column;
  align-items: center;
  width: 8px;
  padding: 2px 0;
}
.vscroll div {
  width: 3px;
  height: 185px;
  margin: 3px 0 auto;
  border-radius: 2px;
  background: #7a7a7a;
}
.arrow-u, .arrow-d {
  border: 2px solid transparent;
  border-top-width: 0;
  border-bottom-color: #777;
}
.arrow-d {
  border-width: 2px 2px 0;
  border-top-color: #777;
}

/* Notification dialog over the Outlook panel */
.dialog {
  position: absolute;
  left: 28px;
  top: 196px;
  width: 279px;
  height: 133px;
  padding: 12px 15px 0 10px;
  border: 1px solid #000;
  background: #fff;
  box-shadow: 3px 3px 5px rgba(0, 0, 0, 0.4);
  color: #666;
  font-size: 6.35px;
}
.dialog h5 {
  margin: 0 0 8px;
  font-size: 9.3px;
  font-weight: 700;
  line-height: 13px;
  color: #111;
}
.dialog-text {
  line-height: 8.5px;
  letter-spacing: 0;
}
.recipient {
  display: flex;
  margin-top: 18px;
}
.recipient .box {
  width: 10px;
  height: 10px;
  margin: 5px 6px 0 2px;
}
.recipient-card {
  display: flex;
  align-items: center;
  width: 234px;
  height: 52px;
  padding-right: 7px;
  border: 1px solid #999;
  border-left: 2px solid #2564a8;
  border-radius: 2px;
}
.recipient-card > .icon {
  width: 12px;
  height: 12px;
  margin: 0 5px 0 8px;
  stroke-width: 1;
}
.who {
  line-height: 9.8px;
  font-size: 5.8px;
  color: #808080;
}
.who b {
  display: block;
  color: #333;
  font-size: 6.4px;
}
.who em {
  display: block;
  margin-top: 3px;
  font-style: italic;
  font-size: 5.2px;
}
.copy-url {
  display: flex;
  align-items: center;
  gap: 3px;
  width: 57px;
  height: 16px;
  margin-left: auto;
  padding-left: 7px;
  border: 1px solid #ddd;
  border-radius: 2px;
  color: #333;
  font-size: 6.5px;
  font-weight: 600;
}
.dialog-x {
  position: absolute;
  right: 6px;
  top: -4px;
}
.tooltip {
  position: absolute;
  right: 4px;
  top: 17px;
  width: 22px;
  height: 16px;
  border-radius: 2px;
  background: #fff;
  box-shadow: 0 1px 3px rgba(0, 0, 0, 0.3);
  font-size: 5.5px;
  line-height: 16px;
  text-align: center;
}
.tooltip::before {
  content: "";
  position: absolute;
  left: 8px;
  top: -5px;
  border: 5px solid transparent;
  border-top-width: 0;
  border-bottom-color: #fff;
}
```
